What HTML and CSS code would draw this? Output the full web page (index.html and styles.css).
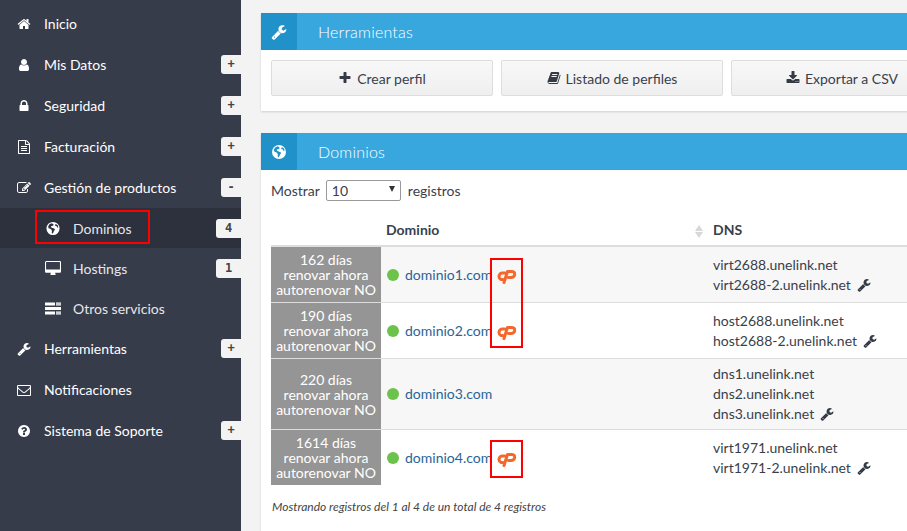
FILE: index.html
```html
<!DOCTYPE html>
<html lang="es">
<head>
<meta charset="utf-8">
<title>Dominios</title>
<link rel="stylesheet" href="styles.css">
</head>
<body>
<svg class="defs" aria-hidden="true">
  <symbol id="i-home" viewBox="0 0 1792 1792"><path d="M1472 992v480q0 26-19 45t-45 19h-384v-384h-256v384h-384q-26 0-45-19t-19-45v-480q0-1 .5-3t.5-3l575-474 575 474q1 2 1 6zm223-69l-62 74q-8 9-21 11h-3q-13 0-21-7l-692-577-692 577q-12 8-24 7-13-2-21-11l-62-74q-8-10-7-23.5t11-21.5l719-599q32-26 76-26t76 26l244 204v-195q0-14 9-23t23-9h192q14 0 23 9t9 23v408l219 182q10 8 11 21.5t-7 23.5z"/></symbol>
  <symbol id="i-user" viewBox="0 0 1792 1792"><path d="M1536 1399q0 109-62.5 187t-150.5 78h-854q-88 0-150.5-78t-62.5-187q0-85 8.5-160.5t31.5-152 58.5-131 94-89 134.5-34.5q131 128 313 128t313-128q76 0 134.5 34.5t94 89 58.5 131 31.5 152 8.5 160.5zm-256-887q0 159-112.5 271.5t-271.5 112.5-271.5-112.5-112.5-271.5 112.5-271.5 271.5-112.5 271.5 112.5 112.5 271.5z"/></symbol>
  <symbol id="i-lock" viewBox="0 0 1792 1792"><path d="M640 768h512v-192q0-106-75-181t-181-75-181 75-75 181v192zm832 96v576q0 40-28 68t-68 28h-960q-40 0-68-28t-28-68v-576q0-40 28-68t68-28h32v-192q0-184 132-316t316-132 316 132 132 316v192h32q40 0 68 28t28 68z"/></symbol>
  <symbol id="i-file" viewBox="0 0 1792 1792"><path d="M1596 380q28 28 48 76t20 88v1152q0 40-28 68t-68 28h-1344q-40 0-68-28t-28-68v-1600q0-40 28-68t68-28h896q40 0 88 20t76 48zm-444-244v376h376q-10-29-22-41l-313-313q-12-12-41-22zm384 1528v-1024h-416q-40 0-68-28t-28-68v-416h-768v1536h1280zm-1024-864q0-14 9-23t23-9h704q14 0 23 9t9 23v64q0 14-9 23t-23 9h-704q-14 0-23-9t-9-23v-64zm736 224q14 0 23 9t9 23v64q0 14-9 23t-23 9h-704q-14 0-23-9t-9-23v-64q0-14 9-23t23-9h704zm0 256q14 0 23 9t9 23v64q0 14-9 23t-23 9h-704q-14 0-23-9t-9-23v-64q0-14 9-23t23-9h704z"/></symbol>
  <symbol id="i-edit" viewBox="0 0 1792 1792"><path d="M888 1184l116-116-152-152-116 116v56h96v96h56zm440-720q-16-16-33 1l-350 350q-17 17-1 33t33-1l350-350q17-17 1-33zm80 594v190q0 119-84.5 203.5t-203.5 84.5h-832q-119 0-203.5-84.5t-84.5-203.5v-832q0-119 84.5-203.5t203.5-84.5h832q63 0 117 25 15 7 18 23 3 17-9 29l-49 49q-14 14-32 8-23-6-45-6h-832q-66 0-113 47t-47 113v832q0 66 47 113t113 47h832q66 0 113-47t47-113v-126q0-13 9-22l64-64q15-15 35-7t20 29zm-96-738l288 288-672 672h-288v-288zm444 132l-92 92-288-288 92-92q28-28 68-28t68 28l152 152q28 28 28 68t-28 68z"/></symbol>
  <symbol id="i-globe" viewBox="0 0 16 16"><path fill-rule="evenodd" d="M8 1a7 7 0 1 1 0 14A7 7 0 0 1 8 1zM6.6 2.3 4.2 3.4 2.9 5.6l.3 2 1.9.7 1.3 1 .5 1.7-.3 1.5.9 1 1-1.4.5-1.6 1-1-.3-1.3-2.1-.8-1.5-.6-.4-1.2L7 5.200l1.3-.5.2-1.300zM11 3.200l-.9 1.100.6 1 1.300.3.700 1.700.9-.7-.5-2z"/></symbol>
  <symbol id="i-desktop" viewBox="0 0 1920 1792"><path d="M1792 992v-832q0-13-9.500-22.500t-22.500-9.500h-1600q-13 0-22.500 9.500t-9.500 22.500v832q0 13 9.500 22.500t22.500 9.500h1600q13 0 22.500-9.500t9.500-22.500zm128-832v1088q0 66-47 113t-113 47h-544q0 37 16 77.500t32 71 16 43.500q0 26-19 45t-45 19h-512q-26 0-45-19t-19-45q0-14 16-44t32-70 16-78h-544q-66 0-113-47t-47-113v-1088q0-66 47-113t113-47h1632q66 0 113 47t47 113z"/></symbol>
  <symbol id="i-tasks" viewBox="0 0 16 14"><path d="M0 1h10v3H0zM11 1h5v1.300h-5zM11 2.800h5V4h-5zM0 5.500h16v3H0zM0 10h10v3H0zM11 10h5v1.300h-5zM11 11.800h5V13h-5z"/></symbol>
  <symbol id="i-wrench" viewBox="0 0 1792 1792"><path d="M448 1472q0-26-19-45t-45-19-45 19-19 45 19 45 45 19 45-19 19-45zm644-420l-682 682q-37 37-90 37-52 0-91-37l-106-108q-38-36-38-90 0-53 38-91l681-681q39 98 114.5 173.500t173.500 114.500zm634-435q0 39-23 106-47 134-164.500 217.500t-258.500 83.500q-185 0-316.500-131.500t-131.500-316.500 131.500-316.500 316.500-131.500q58 0 121.500 16.500t107.500 46.500q16 11 16 28t-16 28l-293 169v224l193 107q5-3 79-48.500t135.500-81 70.500-35.500q15 0 23.500 10t8.500 25z"/></symbol>
  <symbol id="i-mail" viewBox="0 0 1792 1792"><path d="M1664 1504v-768q-32 36-69 66-268 206-426 338-51 43-83 67t-86.500 48.500-102.500 24.500h-2q-48 0-102.500-24.500t-86.500-48.500-83-67q-158-132-426-338-37-30-69-66v768q0 13 9.500 22.500t22.500 9.500h1472q13 0 22.500-9.500t9.500-22.500zm0-1051v-24.500l-.5-13-3-12.500-5.500-9-9-7.500-14-2.500h-1472q-13 0-22.500 9.500t-9.500 22.500q0 168 147 284 193 152 401 317 6 5 35 29.500t46 37.500 44.500 31.500 50.500 27.500 43 9h2q20 0 43-9t50.500-27.500 44.500-31.500 46-37.500 35-29.500q208-165 401-317 54-43 100.500-115.500t46.500-131.500zm128-37v1088q0 66-47 113t-113 47h-1472q-66 0-113-47t-47-113v-1088q0-66 47-113t113-47h1472q66 0 113 47t47 113z"/></symbol>
  <symbol id="i-help" viewBox="0 0 1792 1792"><path d="M1024 1376v-192q0-14-9-23t-23-9h-192q-14 0-23 9t-9 23v192q0 14 9 23t23 9h192q14 0 23-9t9-23zm256-672q0-88-55.500-163t-138.500-116-170-41q-243 0-371 213-15 24 8 42l132 100q7 6 19 6 16 0 25-12 53-68 86-92 34-24 86-24 48 0 85.500 26t37.500 59q0 38-20 61t-68 45q-63 28-115.500 86.500t-52.500 125.500v36q0 14 9 23t23 9h192q14 0 23-9t9-23q0-19 21.500-49.500t54.500-49.500q32-18 49-28.500t46-35 44.500-48 28-60.500 12.500-81zm384 192q0 209-103 385.500t-279.500 279.500-385.500 103-385.500-103-279.500-279.500-103-385.500 103-385.500 279.500-279.500 385.500-103 385.500 103 279.500 279.500 103 385.500z"/></symbol>
  <symbol id="i-plus" viewBox="0 0 1792 1792"><path d="M1600 736v192q0 40-28 68t-68 28h-416v416q0 40-28 68t-68 28h-192q-40 0-68-28t-28-68v-416h-416q-40 0-68-28t-28-68v-192q0-40 28-68t68-28h416v-416q0-40 28-68t68-28h192q40 0 68 28t28 68v416h416q40 0 68 28t28 68z"/></symbol>
  <symbol id="i-book" viewBox="0 0 1792 1792"><path d="M1703 478q40 57 18 129l-275 906q-19 64-76.500 107.500t-122.500 43.500h-923q-77 0-148.500-53.500t-99.500-131.500q-24-67-2-127 0-4 3-27t4-37q1-8-3-21.500t-3-19.500q2-11 8-21t16.500-23.500 16.500-23.500q23-38 45-91.500t30-91.500q3-10 .5-30t-.5-28q3-11 17-28t17-23q21-36 42-92t25-90q1-9-2.500-32t.5-28q4-13 22-30.500t22-22.500q19-26 42.500-84.500t27.500-96.500q1-8-3-25.500t-2-26.500q2-8 9-18t18-23 17-21q8-12 16.500-30.500t15-35 16-36 19.500-32 26.500-23.500 36-11.500 47.500 5.500l-1 3q38-9 51-9h761q74 0 114 56t18 130l-274 906q-36 119-71.500 153.500t-128.500 34.500h-869q-27 0-38 15-11 16-1 43 24 70 144 70h923q29 0 56-15.500t35-41.500l300-987q7-22 5-57 38 15 59 43zm-1064 2q-4 13 2 22.500t20 9.500h608q13 0 25.500-9.500t16.500-22.500l21-64q4-13-2-22.500t-20-9.500h-608q-13 0-25.500 9.500t-16.500 22.500zm-83 256q-4 13 2 22.500t20 9.500h608q13 0 25.500-9.500t16.500-22.500l21-64q4-13-2-22.500t-20-9.500h-608q-13 0-25.500 9.500t-16.500 22.500z"/></symbol>
  <symbol id="i-download" viewBox="0 0 1792 1792"><path d="M1344 1344q0-26-19-45t-45-19-45 19-19 45 19 45 45 19 45-19 19-45zm256 0q0-26-19-45t-45-19-45 19-19 45 19 45 45 19 45-19 19-45zm128-224v320q0 40-28 68t-68 28h-1472q-40 0-68-28t-28-68v-320q0-40 28-68t68-28h465l135 136q58 56 136 56t136-56l136-136h464q40 0 68 28t28 68zm-325-569q17 41-14 70l-448 448q-18 19-45 19t-45-19l-448-448q-31-29-14-70 17-39 59-39h256v-448q0-26 19-45t45-19h256q26 0 45 19t19 45v448h256q42 0 59 39z"/></symbol>
  <symbol id="i-cp" viewBox="0 0 20 15"><g fill="none" stroke="currentColor" stroke-width="3" stroke-linecap="round" stroke-linejoin="round"><path d="M8 4H5.200Q3 4 2.200 6.500T4 10.500H6"/><path d="M7 13.500 10.500 2.500H14.500Q17.800 2.500 17.700 5.300T14.300 8.600H11.500"/></g></symbol>
</svg>

<div class="page">
  <nav class="sidebar">
    <ul class="menu">
      <li class="item"><svg class="ico"><use href="#i-home"/></svg><span class="label">Inicio</span></li>
      <li class="item"><svg class="ico"><use href="#i-user"/></svg><span class="label">Mis Datos</span><span class="badge">+</span></li>
      <li class="item"><svg class="ico"><use href="#i-lock"/></svg><span class="label">Seguridad</span><span class="badge">+</span></li>
      <li class="item"><svg class="ico"><use href="#i-file"/></svg><span class="label">Facturación</span><span class="badge">+</span></li>
      <li class="item"><svg class="ico"><use href="#i-edit"/></svg><span class="label">Gestión de productos</span><span class="badge">-</span></li>
      <li class="item sub active"><svg class="ico"><use href="#i-globe"/></svg><span class="label">Dominios</span><span class="badge wide">4</span></li>
      <li class="item sub"><svg class="ico"><use href="#i-desktop"/></svg><span class="label">Hostings</span><span class="badge wide">1</span></li>
      <li class="item sub"><svg class="ico"><use href="#i-tasks"/></svg><span class="label">Otros servicios</span></li>
      <li class="item"><svg class="ico"><use href="#i-wrench"/></svg><span class="label">Herramientas</span><span class="badge">+</span></li>
      <li class="item"><svg class="ico"><use href="#i-mail"/></svg><span class="label">Notificaciones</span></li>
      <li class="item"><svg class="ico"><use href="#i-help"/></svg><span class="label">Sistema de Soporte</span><span class="badge">+</span></li>
    </ul>
  </nav>

  <main class="main">
    <section class="panel tools">
      <header class="panel-head"><span class="head-icon"><svg class="ico-head"><use href="#i-wrench"/></svg></span><h2 class="head-title">Herramientas</h2></header>
      <div class="tools-body">
        <button class="btn"><svg class="ico-btn"><use href="#i-plus"/></svg>Crear perfil</button>
        <button class="btn"><svg class="ico-btn"><use href="#i-book"/></svg>Listado de perfiles</button>
        <button class="btn"><svg class="ico-btn"><use href="#i-download"/></svg>Exportar a CSV</button>
      </div>
    </section>

    <section class="panel domains">
      <header class="panel-head"><span class="head-icon"><svg class="ico-head"><use href="#i-globe"/></svg></span><h2 class="head-title">Dominios</h2></header>
      <div class="domains-body">
        <div class="length">Mostrar <span class="select">10<i class="caret"></i></span> registros</div>
        <table class="table">
          <colgroup><col class="c1"><col class="c2"><col class="c3"></colgroup>
          <thead>
            <tr><th></th><th class="th-sort">Dominio<span class="sort"><i class="up"></i><i class="down"></i></span></th><th>DNS</th></tr>
          </thead>
          <tbody>
            <tr class="odd">
              <td class="days">162 días<br>renovar ahora<br>autorenovar NO</td>
              <td class="dom"><span class="dot"></span><a class="link">dominio1.com</a><svg class="cp"><use href="#i-cp"/></svg></td>
              <td class="dns">virt2688.unelink.net<br>virt2688-2.unelink.net<svg class="tool"><use href="#i-wrench"/></svg></td>
            </tr>
            <tr>
              <td class="days">190 días<br>renovar ahora<br>autorenovar NO</td>
              <td class="dom"><span class="dot"></span><a class="link">dominio2.com</a><svg class="cp"><use href="#i-cp"/></svg></td>
              <td class="dns">host2688.unelink.net<br>host2688-2.unelink.net<svg class="tool"><use href="#i-wrench"/></svg></td>
            </tr>
            <tr class="odd">
              <td class="days">220 días<br>renovar ahora<br>autorenovar NO</td>
              <td class="dom"><span class="dot"></span><a class="link">dominio3.com</a></td>
              <td class="dns">dns1.unelink.net<br>dns2.unelink.net<br>dns3.unelink.net<svg class="tool"><use href="#i-wrench"/></svg></td>
            </tr>
            <tr>
              <td class="days">1614 días<br>renovar ahora<br>autorenovar NO</td>
              <td class="dom"><span class="dot"></span><a class="link">dominio4.com</a><svg class="cp"><use href="#i-cp"/></svg></td>
              <td class="dns">virt1971.unelink.net<br>virt1971-2.unelink.net<svg class="tool"><use href="#i-wrench"/></svg></td>
            </tr>
          </tbody>
        </table>
        <p class="info">Mostrando registros del 1 al 4 de un total de 4 registros</p>
      </div>
    </section>
  </main>

  <div class="mark mark-menu"></div>
  <div class="mark mark-a"></div>
  <div class="mark mark-b"></div>
</div>
</body>
</html>
```

FILE: styles.css
```css
* { box-sizing: border-box; }
html, body { margin: 0; padding: 0; height: 100%; overflow: hidden; }
body { font-family: Lato, "Open Sans", sans-serif; font-size: 14px; color: #3a3f4b; background: #f3f3f3; }
.defs { position: absolute; width: 0; height: 0; }
.page { position: relative; display: flex; width: 907px; height: 531px; overflow: hidden; }

.sidebar { flex: 0 0 241px; background: #373c4a; padding-top: 3px; }
.menu { list-style: none; margin: 0; padding: 0; }
.item { display: flex; align-items: center; height: 41px; padding-left: 17px; color: #fff; }
.item.sub { height: 40px; padding-left: 45px; color: #e6e7ea; }
.item.active { background: #2d313d; }
.ico { width: 14px; height: 14px; fill: #fff; flex: none; margin-right: 13px; }
.item.sub .ico { width: 16px; height: 15px; margin-right: 12px; }
.label { flex: 1; font-size: 14px; }
.badge { width: 20px; height: 19px; background: #f3f3f3; color: #444; border-radius: 3px 0 0 3px; font-size: 12px; font-weight: 700; line-height: 19px; text-align: center; font-family: "DejaVu Sans Mono", monospace; }
.badge.wide { width: 25px; }

.main { flex: 1; min-width: 0; padding: 13px 0 0 20px; overflow: hidden; }
.panel { width: 720px; background: #fff; box-shadow: 0 1px 2px rgba(0,0,0,.15); }
.tools { height: 98px; margin-bottom: 22px; }
.domains { height: 420px; }
.panel-head { display: flex; align-items: center; height: 37px; background: #38a7de; color: #fff; }
.head-icon { display: flex; align-items: center; justify-content: center; width: 36px; height: 37px; background: #2192c9; margin-right: 21px; }
.ico-head { width: 16px; height: 16px; fill: #fff; }
.head-title { margin: 0; font-size: 16px; font-weight: 300; letter-spacing: .2px; }

.tools-body { display: flex; gap: 8px; padding: 10px; }
.btn { flex: none; display: flex; align-items: center; justify-content: center; width: 222px; height: 36px; padding: 0; border: 1px solid #ddd; border-radius: 2px; background: linear-gradient(#f8f8f8, #efefef); font: 400 14px Lato, sans-serif; color: #3a3f4b; }
.ico-btn { width: 14px; height: 14px; fill: #343a46; margin-right: 5px; }

.domains-body { padding: 10px; }
.length { display: flex; align-items: center; height: 21px; }
.select { position: relative; display: block; width: 75px; height: 21px; margin: 0 7px 0 6px; padding-left: 5px; border: 1px solid #999; border-radius: 2px; background: #fff; line-height: 19px; }
.caret { position: absolute; right: 5px; top: 5px; border-left: 3.5px solid transparent; border-right: 3.5px solid transparent; border-top: 6px solid #333; }

.table { table-layout: fixed; width: 690px; margin-top: 17px; border-collapse: collapse; }
.c1 { width: 110px; }
.c2 { width: 327px; }
.table th { height: 28px; padding: 0 5px 4px; border-bottom: 2px solid #ddd; text-align: left; font-weight: 700; font-size: 14px; color: #3a3f4b; }
.th-sort { position: relative; }
.sort { position: absolute; right: 5px; top: 7px; display: flex; flex-direction: column; gap: 1px; }
.up, .down { display: block; border-left: 4px solid transparent; border-right: 4px solid transparent; }
.up { border-bottom: 6px solid #d8d8d8; }
.down { border-top: 6px solid #d8d8d8; }
.table td { padding: 5px; border-top: 1px solid #ddd; line-height: 20px; vertical-align: middle; }
.table tbody tr:first-child td { border-top: 0; }
.odd td { background: #f7f7f7; }
.table td.days { padding: 5px 0; background: #959595; color: #fff; text-align: center; line-height: 15px; }
.dot { display: inline-block; width: 12px; height: 12px; margin: 0 6px 0 1px; border-radius: 50%; background: #6cc24a; vertical-align: -1px; }
.link { color: #2a6496; }
.cp { width: 20px; height: 15px; color: #f4682c; margin-left: 5px; vertical-align: -4px; }
.tool { width: 14px; height: 14px; fill: #343a46; margin-left: 6px; vertical-align: -2px; }
.info { margin: 14px 0 0 1px; font-size: 12px; font-style: italic; color: #444; }

.mark { position: absolute; border: 2px solid #f00; pointer-events: none; }
.mark-menu { left: 35px; top: 210px; width: 115px; height: 34px; }
.mark-a { left: 490px; top: 258px; width: 33px; height: 90px; }
.mark-b { left: 490px; top: 440px; width: 33px; height: 38px; }
```
